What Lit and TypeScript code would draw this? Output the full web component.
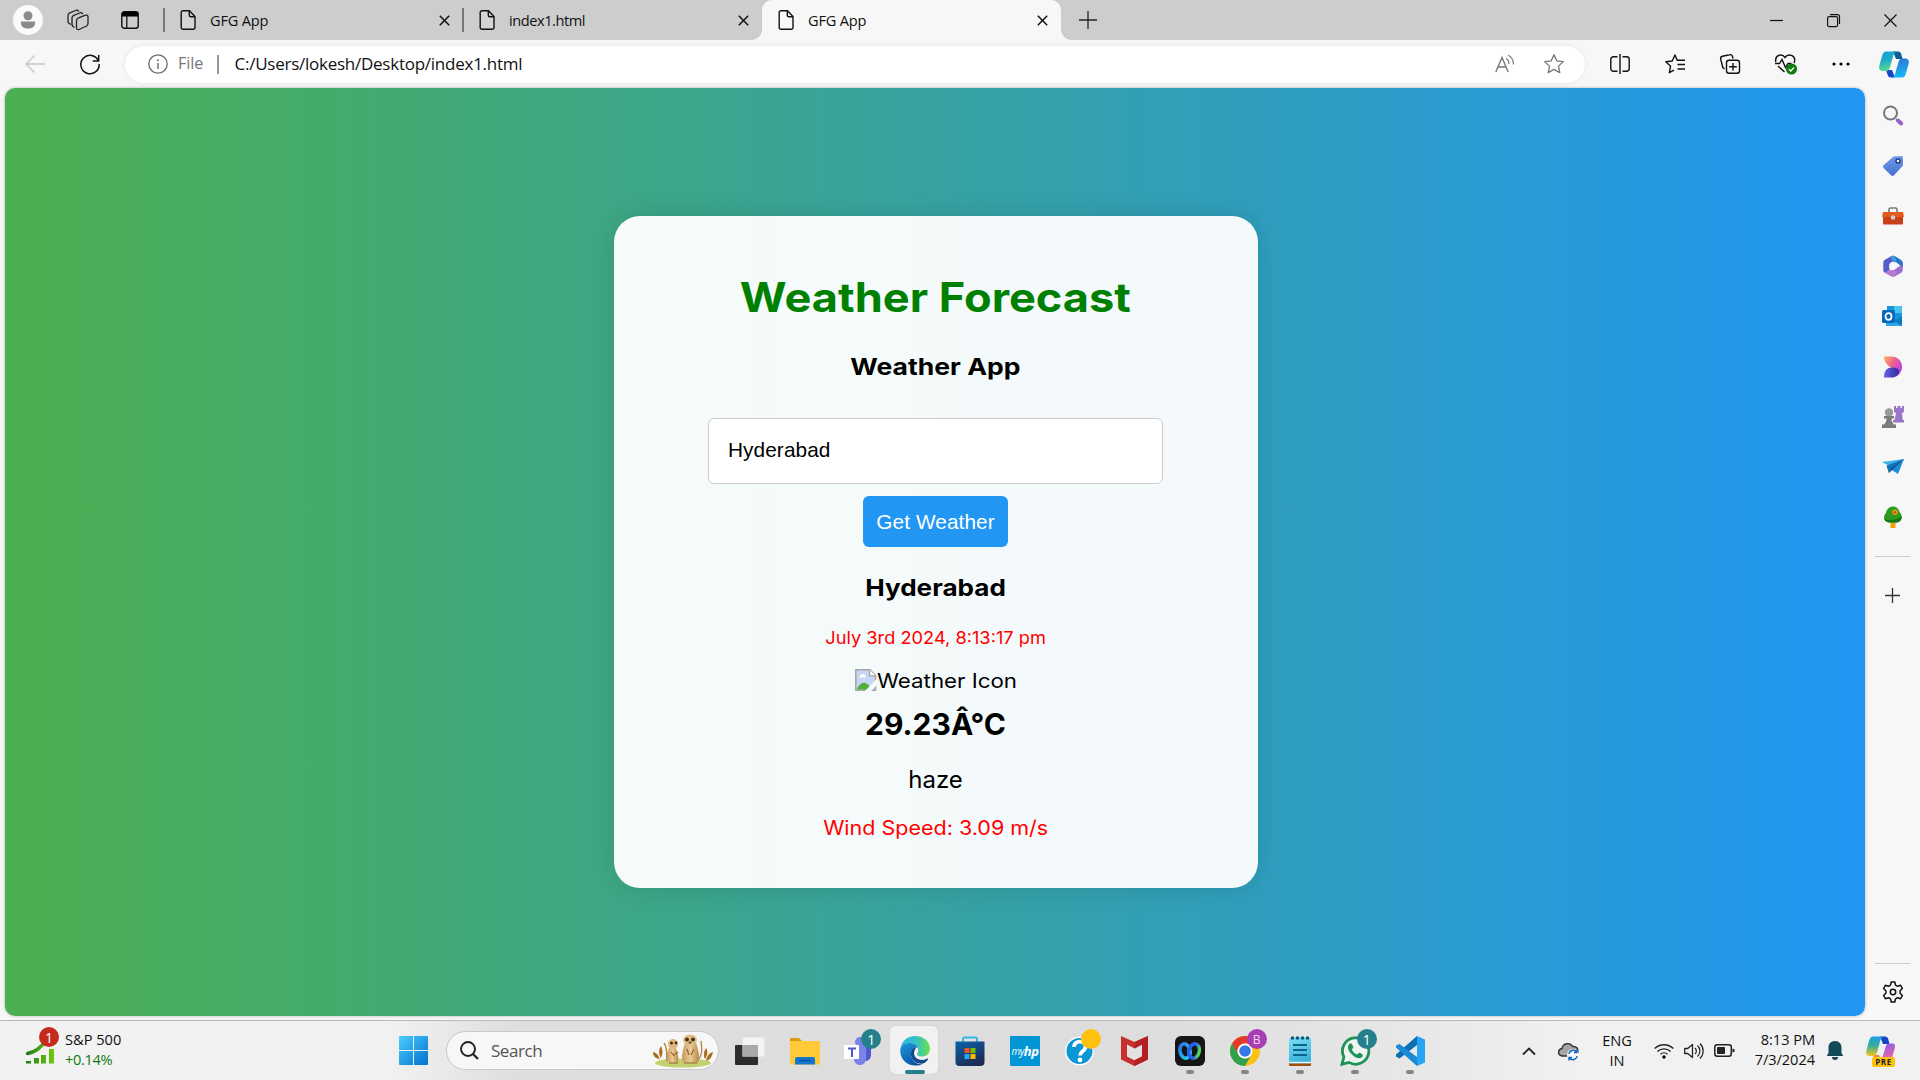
import { LitElement, html, css, svg } from "lit";
import { customElement } from "lit/decorators.js";

const draw = (w: number, h: number, body: unknown, box = `0 0 ${w} ${h}`) =>
  html`<svg class="glyph" width=${w} height=${h} viewBox=${box}>${body}</svg>`;

const doc = draw(16, 20, svg`<path d="M3 .8h6.500L15 6.500V17.500a1.800 1.800 0 0 1-1.800 1.800H3a1.800 1.800 0 0 1-1.800-1.800V2.600A1.800 1.800 0 0 1 3 .8zM9.300 1v4.200a1.500 1.500 0 0 0 1.500 1.500H15" fill="rgba(255,255,255,.15)" stroke="#111" stroke-width="1.400"/>`);
const cross = draw(11, 11, svg`<path d="M.8.8l9.400 9.400M10.200.8L.8 10.200" stroke="#111" stroke-width="1.500"/>`);

const sideIcons = [
  draw(22, 22, svg`<circle cx="8.500" cy="8" r="6.500" fill="none" stroke="#777" stroke-width="2"/><path d="M14 14l1 1" stroke="#888" stroke-width="2"/><path d="M16 15.500l3.200 3" stroke="#9a5fc9" stroke-width="4" stroke-linecap="round"/>`),
  draw(22, 22, svg`<defs><linearGradient id="tg" x2="0" y2="1"><stop stop-color="#6f9be8"/><stop offset="1" stop-color="#4470cf"/></linearGradient></defs><path d="M11.500 1.500L19 1a1.800 1.800 0 0 1 2 2v7.500L12 20.200a2.200 2.200 0 0 1-3 0L1.600 13a2 2 0 0 1 0-2.800z" fill="url(#tg)"/><circle cx="16" cy="6" r="2" fill="#fff" stroke="#223a86" stroke-width="1.500"/>`),
  draw(22, 18, svg`<path d="M7 5V2.200A1.500 1.500 0 0 1 8.500 1h5A1.500 1.500 0 0 1 15 2.200V5" fill="none" stroke="#777" stroke-width="1.600"/><rect x="1" y="8" width="20" height="9.500" rx="1" fill="#c7401a"/><path d="M1 5h20l1 5H0z" fill="#e45a1c"/><circle cx="11" cy="10.500" r="2.300" fill="#ccc"/>`),
  draw(22, 22, svg`<path d="M9 1.200a4 4 0 0 1 4 0L19 4.700a3 3 0 0 1 1.700 2.800V12l-6-4.500-5-.5z" fill="#3c9fe0"/><path d="M20.700 9v6.500a3 3 0 0 1-1.500 2.300l-6 3.500-3-5.300 4.500-3z" fill="#9a6fd6"/><path d="M1.500 16.500l7-1.500 6 1-1.500 5.300a4 4 0 0 1-4 0L3 18z" fill="#b778d2"/><path d="M9 1.200L10.500 6 7.500 9v6L2.500 17.500A3 3 0 0 1 1.300 15V7.500A3 3 0 0 1 3 4.700z" fill="#565cc8"/><path d="M13 1l7.700 6.500V12l-6-4.500z" fill="#2c6fc4"/><circle cx="11" cy="11" r="3.800" fill="#f6f6fb"/>`),
  draw(21, 20, svg`<rect x="5" y="0" width="15" height="15" fill="#1596d8"/><path d="M12 0h8v7h-8z" fill="#45c5ef"/><path d="M4 11l8 4 8-5v10H4z" fill="#28a8e8"/><path d="M20 10v10l-8-5z" fill="#087bc3"/><rect x="0" y="4" width="13" height="13" rx="1.500" fill="#0868b9"/><ellipse cx="6.500" cy="10.500" rx="3" ry="3.300" fill="none" stroke="#fff" stroke-width="1.800"/>`),
  draw(20, 22, svg`<defs><linearGradient id="d1" x2="1" y2=".6"><stop stop-color="#ffb05a"/><stop offset=".5" stop-color="#f0648c"/><stop offset="1" stop-color="#b63be8"/></linearGradient><linearGradient id="d2"><stop stop-color="#6a63ee"/><stop offset="1" stop-color="#2f2794"/></linearGradient></defs><path d="M1 .5h7C15 .5 19 5 19 11c0 5-4 10.500-10 10.500l6-8C8 13 1 8 1 .5z" fill="url(#d1)"/><path d="M1 21.500C1 16 3 11.500 9 11.500c4 0 7 1.500 7 4 0 3.500-4 6-8 6z" fill="url(#d2)"/>`),
  draw(24, 24, svg`<path d="M13 1h2v2h1.500V1h3v2H21V1h2v6l-2 1 .7 7H23v2.500H12V15h1.500L15 8l-2-1z" fill="#9a76c8"/><circle cx="8" cy="7.500" r="4.200" fill="#999"/><path d="M3 11h10v2.500h-2.500c0 3 1 4.500 2.500 6h2V23H1v-3.500h2c1.500-1.500 2.500-3 2.500-6H3z" fill="#7b7b7b"/>`),
  draw(22, 16, svg`<path d="M0 3L22 0 9 8z" fill="#3cb4ea"/><path d="M22 0L16 15l-7-4.500z" fill="#1b8fd6"/><path d="M22 0L5 7l2 7 3-3z" fill="#0d4f86"/><path d="M22 0L9 9.500 7 14 4.500 6.800z" fill="#1573b8"/>`),
  draw(20, 22, svg`<rect x="7.500" y="15" width="5" height="7" fill="#f0a30a"/><path d="M10 .5c4 0 6 3 6.500 5.500C19 8 19 12 18.500 13c-1 3-4 3.500-6 3.500H7c-3 0-6-1.500-6-5 0-2 .8-3 2-4.500C3.500 3.500 6 .5 10 .5z" fill="#2f9a1d"/><path d="M18.500 10c.5 5-3.500 6.500-6 6.500H7c-2.500 0-5-1-5.800-3.500 6 2 12 1 17.300-3z" fill="#137a18"/><path d="M12 3.800v5M9.500 6.300h5" stroke="#ffb21c" stroke-width="3"/><circle cx="12" cy="6.300" r="1.500" fill="#d8480c"/>`),
];

const copilot = draw(30, 27, svg`<defs><linearGradient id="c1" x2=".3" y2="1"><stop stop-color="#12a5d8"/><stop offset=".5" stop-color="#1babc9"/><stop offset="1" stop-color="#5ddb8c"/></linearGradient><linearGradient id="c2" x2=".2" y2="1"><stop stop-color="#2f6fd2"/><stop offset="1" stop-color="#18b5f5"/></linearGradient></defs><path d="M14 .5h5c2 0 3 1.500 3.500 3.500L23.500 8H17z" fill="#0b5f92"/><path d="M7 19h6l3 7.500h-4c-2 0-3-1-3.500-3z" fill="#1644c8"/><path d="M7 .5h11c-3 .5-3.500 3-4.500 7l-2.500 9c-.7 2.500-2 3.500-4 3.500H4c-3 0-4.500-2-3.600-5.500L3 5C3.800 2 5 .5 7 .5z" fill="url(#c1)"/><path d="M23 26.500H12.500c3-.5 3.500-3 4.500-7l2.500-8.500c.7-2.500 2-3.500 4-3.500H26c3 0 4.500 2 3.700 5L27 22c-.8 3-2 4.500-4 4.500z" fill="url(#c2)"/>`);

const copilotPreview = draw(29, 27, svg`<defs><linearGradient id="p1" x2="0" y2="1"><stop stop-color="#1fa0ea"/><stop offset=".45" stop-color="#2fae9a"/><stop offset="1" stop-color="#f5c51c"/></linearGradient><linearGradient id="p2" x2=".2" y2="1"><stop stop-color="#8a5cf0"/><stop offset="1" stop-color="#f5679a"/></linearGradient></defs><path d="M14 .5h5c2 0 3 1.500 3.500 3.500L23.500 8H17z" fill="#1546c8"/><path d="M7 19h6l3 7.500h-4c-2 0-3-1-3.500-3z" fill="#f08a2c"/><path d="M7 .5h11c-3 .5-3.500 3-4.500 7l-2.500 9c-.7 2.500-2 3.500-4 3.500H4c-3 0-4.500-2-3.600-5.500L3 5C3.800 2 5 .5 7 .5z" fill="url(#p1)"/><path d="M23 26.500H12.500c3-.5 3.500-3 4.500-7l2.500-8.500c.7-2.500 2-3.500 4-3.500H26c3 0 3.500 2 2.700 5L26 22c-.8 3-1 4.500-3 4.500z" fill="url(#p2)"/>`);

const meerkats = draw(62, 34, svg`<defs><linearGradient id="fur"><stop stop-color="#c69a5c"/><stop offset=".5" stop-color="#e9cc96"/><stop offset="1" stop-color="#b98a4b"/></linearGradient></defs>
<ellipse cx="31" cy="29" rx="28" ry="4.500" fill="#c5d070"/>
<path d="M12 9c4 5 2 14 3 18M49 7c1 8 2 14-4 21" fill="none" stroke="#b5803a" stroke-width="1.300"/>
<path d="M8 27C7 21 5 19 1 18c0 4 2 6 6 7M9 24c-3-5-2-9 0-12 2 4 2 8 0 12M53 25c-2-4-1-8 1-11 2 3 2 7-1 11M54 27c1-5 3-8 7-9-1 5-3 8-7 9" fill="#a9701d"/>
<path d="M17 14c-2 4-4 12 0 15h8c3-4 0-11-1-15z" fill="url(#fur)"/><path d="M33 9c-2 6-5 16-1 20h13c4-5 1-14-1-20z" fill="url(#fur)"/>
<ellipse cx="21" cy="10" rx="5" ry="5" fill="#dcb881"/><ellipse cx="38" cy="6" rx="7" ry="5.500" fill="#dfbd86"/>
<circle cx="19.500" cy="9" r="1.500" fill="#4a2c18"/><circle cx="24" cy="9" r="1.400" fill="#4a2c18"/><circle cx="35" cy="5.500" r="1.900" fill="#4a2c18"/><circle cx="41" cy="5.500" r="1.900" fill="#4a2c18"/><ellipse cx="38" cy="8.500" rx="1.500" ry="1" fill="#5a3821"/>
<path d="M19 18l3 4M26 18l-4 3M35 15l2 6M42 15l-3 6M17 29h9M32 29h13" stroke="#95662f" stroke-width="1.200" fill="none"/>`);

type App = { name: string; art: unknown; mark?: string; active?: boolean; badge?: string; tone?: string };
const apps: App[] = [
  { name: "view", art: draw(30, 30, svg`<rect x="0" y="9" width="23" height="20" rx="1" fill="#2c2c2c"/><rect x="7.500" y="1.500" width="22" height="19" fill="#f4f4f4" opacity=".95"/><path d="M7.500 9H23v11.500H7.500z" fill="#a9a9a9"/>`) },
  { name: "files", art: draw(30, 28, svg`<path d="M0 2a1 1 0 0 1 1-1h8l3 3h17v6H0z" fill="#dc9a05"/><rect y="4" width="30" height="23.500" rx="1" fill="#ffc938"/><path d="M5 27.500V22a2 2 0 0 1 2-2h16a2 2 0 0 1 2 2v5.500z" fill="#1378cf"/><path d="M9 23.500h12" stroke="#0a4f96" stroke-width="1.400"/>`) },
  { name: "teams", art: draw(32, 30, svg`<circle cx="23" cy="8" r="4" fill="#5059c9"/><path d="M16 11h11v8a6 6 0 0 1-7 6z" fill="#5059c9"/><circle cx="16" cy="6" r="5" fill="#7b83eb"/><path d="M10 9h12v13a6 6 0 0 1-12 2z" fill="#7b83eb"/><rect x="0" y="9" width="15" height="14" fill="#fff"/><path d="M4 12.500h8M8 12.500V21" stroke="#5059c9" stroke-width="2"/>`), badge: "1", tone: "teal" },
  { name: "edge", active: true, art: draw(30, 30, svg`<defs><linearGradient id="e1"><stop stop-color="#2fb4e8"/><stop offset=".55" stop-color="#35c2c2"/><stop offset="1" stop-color="#6fe24a"/></linearGradient><linearGradient id="e2" x2=".6" y2="1"><stop stop-color="#1b9be0"/><stop offset="1" stop-color="#0c50a0"/></linearGradient></defs><path d="M.5 13C1.500 5 7.500 0 15 0c9 0 15 6 15 12.500 0 5-3.500 8-8 8-3.500 0-5-1.200-5-2.200 0-.8 1.300-1.300 1.300-3.800C18.300 10 14.500 7 9.500 7 5 7 1.500 9.500.5 13z" fill="url(#e1)"/><path d="M.3 13C1.500 9 5 7 9.500 7c4 0 7 2 8.300 4.500C13 10.500 10.500 15 11 19c.6 5.500 6 10.500 12 9C12 33-1 26 .3 13z" fill="url(#e2)"/><path d="M17.500 11.300c-4.500-1-7 3-6.500 7.700.6 5.500 6.500 10 12 8.500 2.500-1 4-2.500 5-4 .5-.8-.2-1.200-1-.8-7 3.500-15-1-12.500-8 .5-1.500 1.500-2.800 3-3.400z" fill="#114a8b"/>`) },
  { name: "store", art: draw(30, 30, svg`<path d="M8 6V3a1.500 1.500 0 0 1 1.500-1.500h11A1.500 1.500 0 0 1 22 3v3" fill="none" stroke="#35b5ea" stroke-width="2"/><defs><linearGradient id="st" x2=".5" y2="1"><stop stop-color="#0a63ad"/><stop offset="1" stop-color="#1d2b55"/></linearGradient></defs><path d="M.5 5.500h29V26a4 4 0 0 1-4 4h-21a4 4 0 0 1-4-4z" fill="url(#st)"/><path d="M9.500 12h5v5h-5z" fill="#f25022"/><path d="M15.500 12h5v5h-5z" fill="#7fba00"/><path d="M9.500 18h5v5h-5z" fill="#23a8f2"/><path d="M15.500 18h5v5h-5z" fill="#ffb900"/>`) },
  { name: "hp", art: html`<span class="hp"><span>my</span><b>hp</b></span>` },
  { name: "help", art: draw(30, 30, svg`<circle cx="14.500" cy="15" r="13.700" fill="#0b96d4" stroke="#fff" stroke-width="1.300"/><path d="M9 11c0-7 11.500-7 11.500-.5 0 5-5.500 4.500-5.500 9" fill="none" stroke="#fff" stroke-width="3.800"/><circle cx="15" cy="24" r="2.400" fill="#fff"/>`), badge: "", tone: "amber" },
  { name: "shield", art: draw(28, 30, svg`<path d="M0 0l13.500 6L27 0v23.500L13.500 30 0 23.500z" fill="#c8302e"/><path d="M6 8.500l7.500 4 7.500-4v12l-7.500 3.700L6 20.500z" fill="#e2e2e2"/><path d="M13.500 6L27 0v23.500L13.500 30v-5.800l7.500-3.700v-12l-7.500 4z" fill="#b32024"/>`) },
  { name: "webex", mark: "m", art: draw(30, 30, svg`<defs><linearGradient id="w1" x2=".6" y2="1"><stop stop-color="#2e6cf6"/><stop offset="1" stop-color="#25cdea"/></linearGradient><linearGradient id="w2" x2="1" y2="0"><stop stop-color="#2460f4"/><stop offset=".6" stop-color="#2d62f0"/><stop offset="1" stop-color="#4fe04e"/></linearGradient></defs><rect width="30" height="30" rx="6" fill="#161616"/><ellipse cx="10" cy="15" rx="5" ry="7.300" transform="rotate(-14 10 15)" fill="none" stroke="url(#w1)" stroke-width="3.600"/><ellipse cx="19" cy="15" rx="5.200" ry="7.300" transform="rotate(14 19 15)" fill="none" stroke="url(#w2)" stroke-width="3.600"/>`) },
  { name: "chrome", mark: "m", art: draw(30, 30, svg`<circle cx="15" cy="15" r="15" fill="#fbc116"/><path d="M2 7.500A15 15 0 0 1 28 7.500H15a7.500 7.500 0 0 0-6.500 11.300z" fill="#e33b2e"/><path d="M2 7.500l6.500 11.300A7.500 7.500 0 0 0 21.500 18.800L15 30A15 15 0 0 1 2 7.500z" fill="#2da14c"/><circle cx="15" cy="15" r="7.500" fill="#fff"/><circle cx="15" cy="15" r="5.800" fill="#3478e6"/>`), badge: "B", tone: "purple" },
  { name: "notes", mark: "m", art: draw(24, 30, svg`<defs><linearGradient id="np" x2=".3" y2="1"><stop stop-color="#7edcf2"/><stop offset="1" stop-color="#3ab4dd"/></linearGradient></defs><rect x="1" y="26" width="22" height="4" rx="1" fill="#a34e08"/><rect x="1" y="2" width="22" height="25.500" rx="1.500" fill="url(#np)"/><path d="M1 26.500h22" stroke="#f2f2f2" stroke-width="1.500"/><path d="M5 9h14M5 14h14M5 19h14" stroke="#0c6589" stroke-width="2"/><g fill="#075a80"><circle cx="4.500" cy="2" r="1.800"/><circle cx="9.500" cy="2" r="1.800"/><circle cx="14.500" cy="2" r="1.800"/><circle cx="19.500" cy="2" r="1.800"/></g>`) },
  { name: "chat", mark: "m", art: draw(30, 30, svg`<path d="M2 28.200l1.900-7.200A13.200 13.200 0 1 1 9 26.400z" fill="#eef5f0" stroke="#1e9257" stroke-width="2.800"/><path d="M10 7.500c-4 3-1.500 8 2.500 11.500 4.500 4 8 4 10 1.500 1-1.500.3-2-3-3.700-1 0-1.500 1.700-2.500 1.700-2-.5-5-3.500-5-5 0-1 1.500-1 1.300-2.200C12.500 8.500 12 7 10 7.500z" fill="#1e9257"/>`), badge: "1", tone: "teal" },
  { name: "code", mark: "m", art: draw(30, 30, svg`<path d="M22 0l8 3.500v23L22 30z" fill="#27a5f2"/><path d="M22 0v9L4.500 22.500 1 20.500v-2z" fill="#0d6eb5"/><path d="M22 30v-9L4.500 8 1 9.500v2z" fill="#1a8ad6"/>`) },
];

@customElement("app-root")
export class AppRoot extends LitElement {
  static styles = css`
    :host { display: flex; flex-direction: column; width: 1920px; height: 1080px; overflow: hidden; background: #f7f7f7; color: #111; font-family: "Open Sans", "Noto Sans", sans-serif; box-sizing: border-box; }
    * { box-sizing: border-box; }
    .glyph { display: block; flex: none; overflow: visible; }
    .cell { display: flex; align-items: center; justify-content: center; flex: none; }
    .tabs { display: flex; height: 40px; background: #cdcdcd; flex: none; align-items: center; }
    .w56 { width: 56px; } .w43 { width: 43px; } .w64 { width: 65px; padding-right: 3px; } .w57 { width: 57px; height: 40px; } .w54 { width: 54px; }
    .controls { display: flex; padding-right: 1px; }
    .w70 { width: 70px; } .w40 { width: 40px; } .w55 { width: 55.300px; } .w52 { width: 51px; }
    .tab { display: flex; align-items: center; width: 299px; height: 40px; padding: 0 13px 0 16px; font-size: 14.600px; white-space: nowrap; }
    .tab .name { margin-left: 14px; flex: 1; padding-bottom: 1px; letter-spacing: -.2px; }
    .tab .tight { letter-spacing: -.450px; }
    .lined { position: relative; }
    .lined::before { content: ""; position: absolute; left: -1px; top: 8px; height: 24px; width: 1.500px; background: #777; }
    .on { background: #f7f7f7; border-radius: 10px 10px 0 0; position: relative; }
    .on::before, .on::after { content: ""; position: absolute; bottom: 0; width: 10px; height: 10px; }
    .on::before { left: -10px; background: radial-gradient(circle at 0 0, transparent 9.500px, #f7f7f7 10px); }
    .on::after { right: -10px; background: radial-gradient(circle at 100% 0, transparent 9.500px, #f7f7f7 10px); }
    .grow { flex: 1; }
    .bar { display: flex; height: 48px; align-items: center; flex: none; }
    .addr { display: flex; align-items: center; width: 1460px; height: 37px; margin-left: 15px; padding: 0 21px 0 23px; border-radius: 19px; background: #fff; box-shadow: 0 0 4px rgba(0,0,0,.09); font-size: 17px; }
    .addr .scheme { margin-left: 10px; width: 39px; color: #767676; font-size: 16px; padding-bottom: 2px; }
    .addr .rule { width: 1.500px; height: 19px; background: #999; margin-right: 16px; }
    .addr .url { flex: 1; color: #111; white-space: nowrap; padding-bottom: 2px; letter-spacing: -.250px; }
    .gap { width: 7px; }
    .addr .aloud { margin-right: 29px; }
    .mid { display: flex; height: 932px; flex: none; padding-left: 5px; }
    .page { display: flex; justify-content: center; width: 1860px; height: 928px; border-radius: 10px; background: linear-gradient(to right, #4caf50, #2196f3); box-shadow: 0 0 3px rgba(0,0,0,.3); padding-top: 128px; }
    .card { display: flex; flex-direction: column; align-items: center; width: 644px; height: 672px; margin-left: 1px; padding-top: 56px; border-radius: 26px; background: rgba(255,255,255,.95); box-shadow: 0 0 26px rgba(0,0,0,.12); font-family: Inter, "Open Sans", sans-serif; color: #000; white-space: nowrap; }
    .title { font-size: 40.500px; line-height: 50px; font-weight: 700; color: #008000; transform: scaleX(1.115); margin-top: 1px; }
    .sub { font-size: 23.200px; line-height: 30px; font-weight: 700; margin-top: 29px; transform: scaleX(1.145); }
    .field { display: flex; align-items: center; width: 455px; height: 66px; margin-top: 36px; padding: 0 0 2px 19px; border: 1.500px solid #ccc; border-radius: 6px; background: #fff; font: 20.800px "Liberation Sans", sans-serif; letter-spacing: .080px; }
    .btn { display: flex; align-items: center; justify-content: center; width: 145px; height: 51px; margin-top: 12px; border-radius: 6px; background: #2196f3; color: #fff; font: 20.800px "Liberation Sans", sans-serif; letter-spacing: .080px; }
    .place { font-size: 23.200px; line-height: 30px; font-weight: 700; margin-top: 26px; transform: scaleX(1.125); }
    .date { font-size: 17.300px; line-height: 24px; margin-top: 23px; color: #f00; transform: scaleX(1.055); }
    .icon { display: flex; align-items: center; font-size: 20px; line-height: 22px; margin-top: 18px; }
    .icon .alt { transform: scaleX(1.115); transform-origin: 0 50%; margin-right: 14px; padding-top: 2px; }
    .temp { font-size: 30px; line-height: 36px; font-weight: 700; margin-top: 14px; }
    .sky { font-size: 24px; line-height: 28px; margin-top: 24px; }
    .wind { font-size: 20px; line-height: 26px; margin-top: 21px; color: #f00; transform: scaleX(1.075); }
    .side { display: flex; flex-direction: column; align-items: center; width: 55px; padding-top: 3px; }
    .side .cell { height: 50.100px; width: 55px; }
    .side .gear { height: 56px; }
    .sep { width: 35px; height: 1px; background: #ccc; flex: none; }
    .mt { margin-top: 14px; } .plus { margin-top: 14px; }
    .task { display: flex; height: 60px; flex: none; border-top: 1px solid #b9b9b9; background: linear-gradient(to right, #f2f2f2 0, #f2f2f2 20%, #dedede 27%, #dddddd 60%, #e8e8e8 74%, #f1f1f1 82%, #f1f1f1 100%); }
    .stock { display: flex; width: 399px; padding: 7px 0 0 26px; }
    .stock .chart { position: relative; width: 39px; }
    .lines { display: flex; flex-direction: column; font-size: 14.600px; line-height: 20px; white-space: nowrap; }
    .stock .lines { padding-top: 1px; }
    .up { color: #0f7b0f; letter-spacing: -.350px; }
    .dot { position: absolute; display: flex; align-items: center; justify-content: center; width: 20px; height: 20px; border-radius: 50%; font-size: 14px; color: #fff; }
    .red { background: #c42b1c; left: 13px; top: -1px; }
    .teal { background: #24808d; } .amber { background: #ffc10d; } .purple { background: #a63fb5; font-size: 12px; color: #f3d5f7; }
    .win { display: flex; align-items: center; width: 47px; }
    .find { display: flex; align-items: center; width: 273px; height: 39px; margin: 10px 3px 0 0; padding: 0 4px 0 13px; border-radius: 20px; background: #f7f7f7; border: 1px solid #c9c9c9; font-size: 17px; color: #555; letter-spacing: -.450px; }
    .find .hint { flex: 1; margin-left: 12px; }
    .app { position: relative; display: flex; align-items: center; justify-content: center; width: 55.080px; height: 59px; flex: none; }
    .app .dot { left: 29px; top: 8px; }
    .app.active::before { content: ""; position: absolute; left: 3px; top: 5px; width: 48px; height: 48px; border-radius: 5px; background: #f1f1f1; box-shadow: 0 0 1px #aaa; }
    .app .glyph { position: relative; }
    .app.m::after, .app.active::after { content: ""; position: absolute; bottom: 6px; width: 8px; height: 4px; border-radius: 2px; background: #858585; }
    .app.active::after { width: 20px; background: #24808d; }
    .hp { display: flex; align-items: center; justify-content: center; width: 30px; height: 30px; background: #0096d6; color: #fff; border-radius: 1px; font: italic 10px "Open Sans", sans-serif; letter-spacing: -.500px; }
    .hp b { font-size: 13px; }
    .tray { display: flex; align-items: center; flex: none; padding-right: 14px; }
    .t40 { width: 40px; } .t30 { width: 30px; } .t51 { width: 51px; }
    .tray .lines { padding-bottom: 2px; }
    .tray .lang { align-items: center; width: 40px; margin: 0 12px 0 8px; }
    .clock { align-items: flex-end; width: 76px; letter-spacing: -.050px; }
    .tray .clock { padding-bottom: 4px; }
    .pre { position: relative; padding-bottom: 3px; }
    .pre span { position: absolute; left: 17px; bottom: -1px; width: 23px; height: 10px; border-radius: 2px; background: #ffc20e; color: #222; font: 700 8px/10px "Open Sans", sans-serif; text-align: center; letter-spacing: .500px; }
  `;

  render() {
    return html`
      <header class="tabs">
        <div class="cell w56">${draw(30, 30, svg`<circle cx="15" cy="15" r="15" fill="#fafafa"/><circle cx="15" cy="10.700" r="4.500" fill="#8b8b8b"/><path d="M8 16.500h14v2c0 3-3 5-7 5s-7-2-7-5z" fill="#8b8b8b"/>`)}</div>
        <div class="cell w43">${draw(22, 22, svg`<g fill="#cdcdcd" stroke="#222" stroke-width="1.300" stroke-linejoin="round"><path d="M4 15.500l-1.800-1A2.500 2.500 0 0 1 1 12V6.500a3 3 0 0 1 1.700-2.600L10 1l2 1.500" fill="none"/><path d="M7.500 18.500l-1.500-1a3 3 0 0 1-1-2.500V9a3 3 0 0 1 1.700-2.600L14 3.500l2 1.500" fill="none"/><path d="M9.500 11.500a3 3 0 0 1 1.500-2.300l7.500-3c1.500-.5 2.500.3 2.500 1.800v6.500a3 3 0 0 1-1.500 2.500l-7.500 3.500c-1.500.5-2.500-.3-2.500-1.800z"/></g>`)}</div>
        <div class="cell w64">${draw(18, 18, svg`<rect x=".8" y=".8" width="16.400" height="16.400" rx="2.500" fill="none" stroke="#111" stroke-width="1.400"/><path d="M.8 5.500V3A2.300 2.300 0 0 1 3 .8h12A2.300 2.300 0 0 1 17.200 3v2.500z" fill="#000"/><path d="M5.800 5v12" stroke="#111" stroke-width="1.300"/>`)}</div>
        <div class="tab lined">${doc}<span class="name">GFG App</span>${cross}</div>
        <div class="tab lined">${doc}<span class="name tight">index1.html</span>${cross}</div>
        <div class="tab on">${doc}<span class="name">GFG App</span>${cross}</div>
        <div class="cell w54">${draw(18, 18, svg`<path d="M9 0v18M0 9h18" stroke="#222" stroke-width="1.300"/>`)}</div>
        <span class="grow"></span>
        <div class="controls">
          <div class="cell w57">${draw(13, 13, svg`<path d="M0 6.500h13" stroke="#111" stroke-width="1.200"/>`)}</div>
          <div class="cell w57">${draw(13, 13, svg`<rect x=".6" y="2.600" width="10" height="10" rx="1.500" fill="none" stroke="#111" stroke-width="1.200"/><path d="M3 .6h7.500a2 2 0 0 1 2 2V10" fill="none" stroke="#111" stroke-width="1.200"/>`)}</div>
          <div class="cell w57">${draw(13, 13, svg`<path d="M.5.500l12 12M12.500.500l-12 12" stroke="#111" stroke-width="1.200"/>`)}</div>
        </div>
      </header>
      <nav class="bar">
        <div class="cell w70">${draw(20, 18, svg`<path d="M20 9H1M9.500.500L1 9l8.500 8.500" fill="none" stroke="#c8c8c8" stroke-width="1.400"/>`)}</div>
        <div class="cell w40">${draw(20, 20, svg`<path d="M18.500 7A9.200 9.200 0 1 0 19.200 10M18.700 1v6h-6" fill="none" stroke="#111" stroke-width="1.500"/>`)}</div>
        <div class="addr">
          ${draw(20, 20, svg`<circle cx="10" cy="10" r="9.200" fill="none" stroke="#6b6b6b" stroke-width="1.300"/><path d="M10 9v6" stroke="#6b6b6b" stroke-width="1.400"/><circle cx="10" cy="6.200" r="1" fill="#6b6b6b"/>`)}
          <span class="scheme">File</span><span class="rule"></span><span class="url">C:/Users/lokesh/Desktop/index1.html</span>
          <span class="aloud">${draw(20, 20, svg`<path d="M.8 18L7 3.500 13.200 18M3 13h8" fill="none" stroke="#777" stroke-width="1.400"/><path d="M11 4.500c2 1 3 3 3 5.500M13 1.200c3.500 1.500 5.500 5 5.500 9.300" fill="none" stroke="#777" stroke-width="1.200"/>`)}</span>
          ${draw(20, 20, svg`<path d="M10 .8l2.800 6 6.500.8-4.800 4.500 1.300 6.500L10 15.400l-5.800 3.200 1.300-6.500L.7 7.600l6.500-.8z" fill="none" stroke="#777" stroke-width="1.300" stroke-linejoin="round"/>`)}
        </div>
        <span class="gap"></span>
        <div class="cell w55">${draw(20, 20, svg`<path d="M7.500 2.700H3.500A2.700 2.700 0 0 0 .8 5.400v9.200a2.700 2.700 0 0 0 2.700 2.700h4M12.500 2.700h4a2.700 2.700 0 0 1 2.700 2.700v9.200a2.700 2.700 0 0 1-2.700 2.700h-4M10 0v20" fill="none" stroke="#111" stroke-width="1.400"/>`)}</div>
        <div class="cell w55">${draw(20, 20, svg`<path d="M12.500 7L10 1 7.200 7 .8 7.700l4.800 4.500-1.300 6.500 4.700-2.600M12.500 6.200H20M12.500 10.500H20M12.500 15H20" fill="none" stroke="#111" stroke-width="1.400" stroke-linejoin="round"/>`)}</div>
        <div class="cell w55">${draw(20, 20, svg`<path d="M4.500 15L2.800 13.500.7 5.200A2.500 2.500 0 0 1 2.500 2.200L9.500.7a2.500 2.500 0 0 1 3 1.800l.5 2" fill="none" stroke="#111" stroke-width="1.400"/><rect x="6.500" y="6.200" width="13" height="13" rx="2.500" fill="#f7f7f7" stroke="#111" stroke-width="1.400"/><path d="M13 9v7.500M9.200 12.700h7.600" stroke="#111" stroke-width="1.400"/>`)}</div>
        <div class="cell w55">${draw(22, 20, svg`<path d="M.8 8C-.5 1 7-1 10 3.500 13-1 21 1 19.500 7.500L19 9M3 12l6.500 6" fill="none" stroke="#111" stroke-width="1.400"/><path d="M0 9.500h4.500l2.500-4 3.500 8 2.500-4h3.500" fill="none" stroke="#111" stroke-width="1.400"/><circle cx="16.500" cy="15" r="5.600" fill="#107c10"/><path d="M14 15.300l1.800 1.700 3.200-3.500" fill="none" stroke="#fff" stroke-width="1.300"/>`)}</div>
        <div class="cell w55">${draw(18, 4, svg`<circle cx="2" cy="2" r="1.600"/><circle cx="9" cy="2" r="1.600"/><circle cx="16" cy="2" r="1.600"/>`)}</div>
        <div class="cell w52">${copilot}</div>
      </nav>
      <section class="mid">
        <main class="page">
          <div class="card">
            <div class="title">Weather Forecast</div>
            <div class="sub">Weather App</div>
            <div class="field">Hyderabad</div>
            <div class="btn">Get Weather</div>
            <div class="place">Hyderabad</div>
            <div class="date">July 3rd 2024, 8:13:17 pm</div>
            <div class="icon">${draw(22, 22, svg`<path d="M.8.800h14L20.500 6.500V21.200H.8z" fill="#c6d6f4" stroke="#a5a5a5" stroke-width="1.500"/><path d="M14.500.800v6h6" fill="#fff" stroke="#a5a5a5" stroke-width="1.300"/><path d="M4 8.500a2 2 0 0 1 1.500-2 2.500 2.500 0 0 1 4.500 0 1.800 1.800 0 0 1 .5 2z" fill="#fff"/><path d="M1.800 20.500c3-8 9-9 13-3l-3 3z" fill="#4fae38"/><path d="M22 9.500L10 22h6l6-6z" fill="#f5fafb"/>`)}<span class="alt">Weather Icon</span></div>
            <div class="temp">29.23Â°C</div>
            <div class="sky">haze</div>
            <div class="wind">Wind Speed: 3.09 m/s</div>
          </div>
        </main>
        <aside class="side">
          ${sideIcons.map((i) => html`<div class="cell">${i}</div>`)}
          <span class="sep mt"></span>
          <div class="cell plus">${draw(15, 15, svg`<path d="M7.500 0v15M0 7.500h15" stroke="#333" stroke-width="1.300"/>`)}</div>
          <span class="grow"></span>
          <span class="sep"></span>
          <div class="cell gear">${draw(22, 22, svg`<path d="M9.200 1h3.600l.7 3.100 2 1.200 3.100-1 1.800 3.200-2.300 2.200v2.600l2.300 2.200-1.800 3.200-3.100-1-2 1.200-.7 3.100H9.200l-.7-3.100-2-1.200-3.100 1-1.800-3.200 2.300-2.200V9.700L1.600 7.500l1.800-3.200 3.100 1 2-1.200z" fill="none" stroke="#111" stroke-width="1.500" stroke-linejoin="round"/><circle cx="11" cy="11" r="2.700" fill="none" stroke="#111" stroke-width="1.500"/>`)}</div>
        </aside>
      </section>
      <footer class="task">
        <div class="stock">
          <div class="chart">${draw(30, 36, svg`<defs><linearGradient id="gr" gradientUnits="userSpaceOnUse" x1="0" y1="0" x2="28" y2="0"><stop stop-color="#1c7d18"/><stop offset="1" stop-color="#76c80e"/></linearGradient></defs><path d="M1.500 25.500C10 24 15 20 20 12" stroke="url(#gr)" stroke-width="3.500" stroke-linecap="round" fill="none"/><path d="M0 33h5v2.500H0zM8 30h5v5.500H8zM15 27h5v8.500h-5zM23 21h5v14.500h-5z" fill="url(#gr)"/>`)}<span class="dot red">1</span></div>
          <div class="lines"><span>S&amp;P 500</span><span class="up">+0.14%</span></div>
        </div>
        <div class="win">${draw(29, 29, svg`<defs><linearGradient id="wm" x1="0" y1="0" x2="29" y2="29" gradientUnits="userSpaceOnUse"><stop stop-color="#4ccffd"/><stop offset="1" stop-color="#0070d0"/></linearGradient></defs><path d="M0 1a1 1 0 0 1 1-1h13v14H0zM15 0h13a1 1 0 0 1 1 1v13H15zM0 15h14v14H1a1 1 0 0 1-1-1zM15 15h14v13a1 1 0 0 1-1 1H15z" fill="url(#wm)"/>`)}</div>
        <div class="find">${draw(19, 19, svg`<circle cx="8" cy="8" r="7" fill="none" stroke="#222" stroke-width="1.900"/><path d="M13 13l5 5" stroke="#222" stroke-width="2.200"/>`)}<span class="hint">Search</span>${meerkats}</div>
        ${apps.map((a) => html`<div class="app ${a.mark ?? ""} ${a.active ? "active" : ""}">${a.art}${a.badge !== undefined ? html`<span class="dot ${a.tone}">${a.badge}</span>` : ""}</div>`)}
        <span class="grow"></span>
        <div class="tray">
          <div class="cell t40">${draw(14, 8, svg`<path d="M1 7.500l6-6 6 6" fill="none" stroke="#222" stroke-width="1.800"/>`)}</div>
          <div class="cell t40">${draw(22, 20, svg`<path d="M4 15C-1 14 0 8 4 7.500 5 2 12 1 14.500 5.500c4-.5 6 2 5.500 6l-2 3.500z" fill="#a5a5a5" stroke="#333" stroke-width="1.400"/><circle cx="15" cy="14" r="6" fill="#f8f8f8"/><path d="M11 13a4.200 4.200 0 0 1 7.500-2M19 15a4.200 4.200 0 0 1-7.500 2M19 8.500V11.500h-3M11 19.500v-3h3" fill="none" stroke="#0b66c2" stroke-width="1.400"/>`)}</div>
          <div class="lines lang"><span>ENG</span><span>IN</span></div>
          <div class="cell t30">${draw(20, 16, svg`<path d="M.7 5.500a13.300 13.300 0 0 1 18.600 0M3.500 8.500a9.300 9.300 0 0 1 13 0M6.500 11.300a5 5 0 0 1 7 0" fill="none" stroke="#222" stroke-width="1.400"/><circle cx="10" cy="14" r="1.700"/>`)}</div>
          <div class="cell t30">${draw(20, 16, svg`<path d="M.7 5.500h3L8.500 1.500v13L3.700 10.500h-3z" fill="none" stroke="#222" stroke-width="1.300" stroke-linejoin="round"/><path d="M11 5a4 4 0 0 1 0 6M13.500 2.500a7.500 7.500 0 0 1 0 11M16 .5a10.500 10.500 0 0 1 0 15" fill="none" stroke="#222" stroke-width="1.200"/>`)}</div>
          <div class="cell t30">${draw(21, 13, svg`<rect x=".8" y=".8" width="16.500" height="11.400" rx="2.500" fill="none" stroke="#222" stroke-width="1.500"/><rect x="3" y="3" width="8" height="7" rx=".8" fill="#222"/><path d="M18.500 4.500l2 .7v2.600l-2 .7z" fill="#222"/>`)}</div>
          <div class="lines clock"><span>8:13 PM</span><span>7/3/2024</span></div>
          <div class="cell t40">${draw(16, 19, svg`<path d="M8 0c4.500 0 6.500 3 6.500 6.500V12l1.500 2.500V15H0v-.5L1.500 12V6.500C1.500 3 3.500 0 8 0zM5 16h6a3 3 0 0 1-6 0z" fill="#14495a"/>`)}</div>
          <div class="cell t51 pre">${copilotPreview}<span>PRE</span></div>
        </div>
      </footer>
    `;
  }
}
